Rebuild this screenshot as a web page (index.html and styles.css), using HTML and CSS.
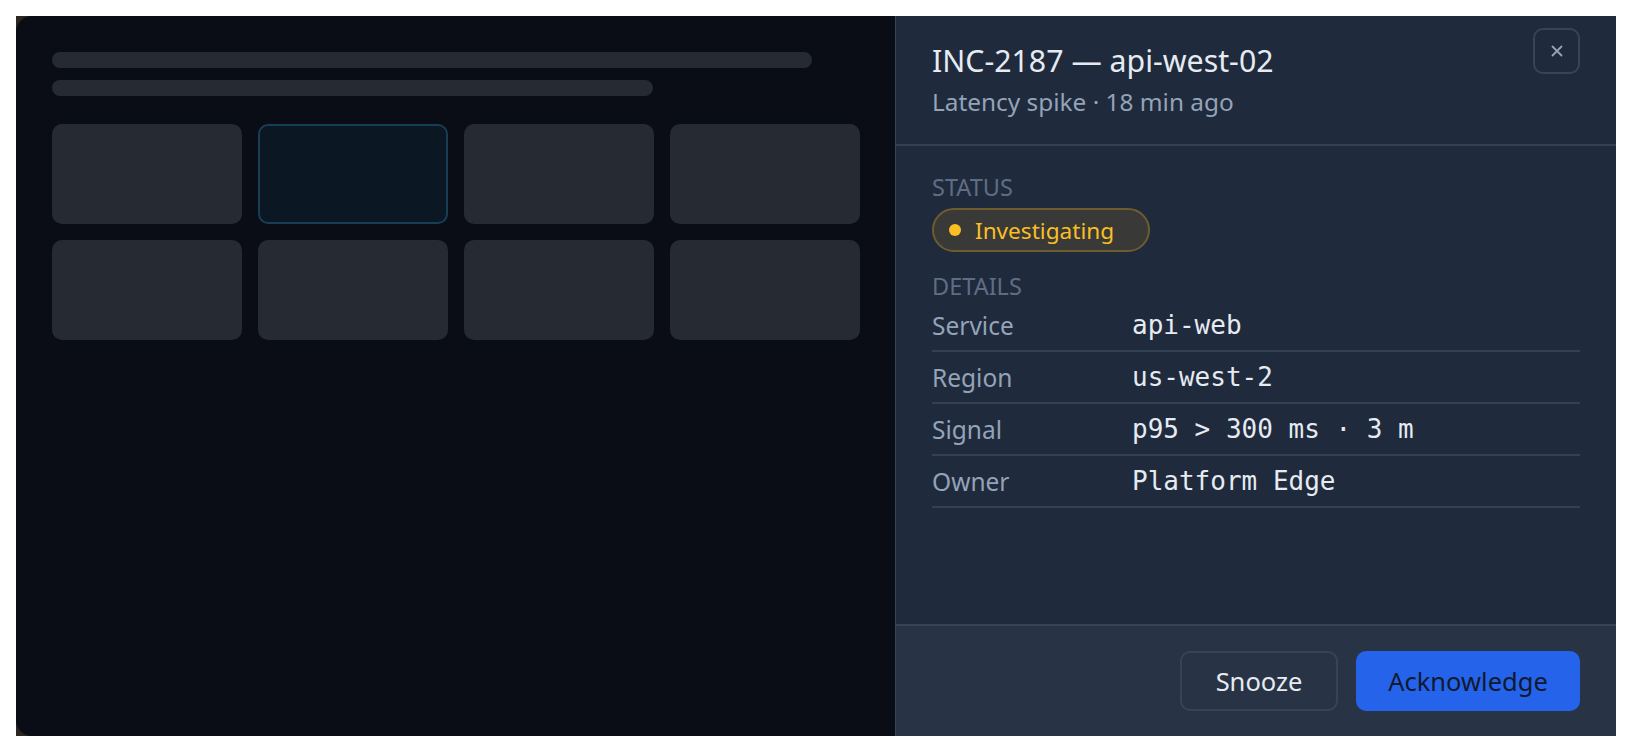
FILE: index.html
```html
<!DOCTYPE html>
<html lang="en">
<head>
<meta charset="utf-8">
<title>Incident INC-2187</title>
<link rel="stylesheet" href="styles.css">
</head>
<body>
<div class="frame">
  <main class="main">
    <div class="skeleton-lines">
      <div class="line line-long"></div>
      <div class="line line-short"></div>
    </div>
    <div class="cards">
      <div class="card"></div>
      <div class="card card-active"></div>
      <div class="card"></div>
      <div class="card"></div>
      <div class="card"></div>
      <div class="card"></div>
      <div class="card"></div>
      <div class="card"></div>
    </div>
  </main>

  <aside class="drawer">
    <header class="drawer-head">
      <div class="head-text">
        <h1 class="title">INC-2187 — api-west-02</h1>
        <p class="subtitle">Latency spike · 18 min ago</p>
      </div>
      <button class="close" aria-label="Close">
        <svg width="14" height="14" viewBox="0 0 14 14"><path d="M2.5 2.5 L11.5 11.5 M11.5 2.5 L2.5 11.5" stroke="#94a3b8" stroke-width="1.8" stroke-linecap="round"/></svg>
      </button>
    </header>

    <section class="drawer-body">
      <div class="section-label">Status</div>
      <span class="badge"><span class="dot"></span>Investigating</span>

      <div class="section-label details-label">Details</div>
      <dl class="details">
        <div class="row"><dt>Service</dt><dd>api-web</dd></div>
        <div class="row"><dt>Region</dt><dd>us-west-2</dd></div>
        <div class="row"><dt>Signal</dt><dd>p95 &gt; 300 ms · 3 m</dd></div>
        <div class="row"><dt>Owner</dt><dd>Platform Edge</dd></div>
      </dl>
    </section>

    <footer class="drawer-foot">
      <button class="btn btn-ghost">Snooze</button>
      <button class="btn btn-primary">Acknowledge</button>
    </footer>
  </aside>
</div>
</body>
</html>
```

FILE: styles.css
```css
* { box-sizing: border-box; }

html, body {
  margin: 0;
  padding: 0;
  background: #ffffff;
}

body {
  padding: 16px;
  font-family: "Noto Sans", "Open Sans", sans-serif;
}

.frame {
  position: relative;
  width: 1600px;
  height: 720px;
  background: #2a2721;
  overflow: hidden;
}

.main {
  height: 100%;
  background: #0a0d16;
  border-radius: 16px;
  padding: 36px;
}

.skeleton-lines {
  display: flex;
  flex-direction: column;
  gap: 12px;
  width: 808px;
}

.line {
  height: 16px;
  border-radius: 8px;
  background: #262a33;
}

.line-long { width: 760px; }
.line-short { width: 601px; }

.cards {
  margin-top: 28px;
  width: 808px;
  display: grid;
  grid-template-columns: repeat(4, 1fr);
  grid-auto-rows: 100px;
  gap: 16px;
}

.card {
  background: #262a33;
  border-radius: 10px;
}

.card-active {
  background: #0b1722;
  border: 2px solid #183e55;
}

/* Drawer overlay */
.drawer {
  position: absolute;
  top: 0;
  right: 0;
  bottom: 0;
  width: 721px;
  background: #1f2a3c;
  border-left: 1px solid #36445a;
  display: flex;
  flex-direction: column;
  color: #e2e8f0;
}

.drawer-head {
  display: flex;
  justify-content: space-between;
  align-items: flex-start;
  padding: 26px 36px 26px 36px;
  border-bottom: 2px solid #334155;
}

.title {
  margin: 0;
  font-size: 30.3px;
  line-height: 38px;
  font-weight: 400;
  color: #e6ebf2;
}

.subtitle {
  margin: 6px 0 0 0;
  font-size: 24.4px;
  line-height: 32px;
  color: #94a3b8;
}

.close {
  margin-top: -14px;
  width: 47px;
  height: 46px;
  border: 2px solid #36445a;
  border-radius: 10px;
  background: transparent;
  display: flex;
  align-items: center;
  justify-content: center;
  padding: 0;
}

.drawer-body {
  flex: 1;
  padding: 27px 36px 0 36px;
}

.section-label {
  font-size: 23.5px;
  line-height: 28px;
  text-transform: uppercase;
  color: #5f6d84;
}

.badge {
  margin-top: 7px;
  display: inline-flex;
  align-items: center;
  gap: 14px;
  height: 44px;
  padding: 0 34px 0 15px;
  border: 2px solid #6e5c2f;
  border-radius: 22px;
  background: #393a37;
  color: #fbbf24;
  font-size: 22.6px;
}

.dot {
  width: 12px;
  height: 12px;
  border-radius: 50%;
  background: #fbbf24;
}

.details-label {
  margin-top: 20px;
}

.details {
  margin: 0;
}

.row {
  display: flex;
  align-items: center;
  height: 52px;
  border-bottom: 2px solid #334155;
}

.row dt {
  width: 200px;
  font-size: 24.5px;
  color: #94a3b8;
}

.row dd {
  margin: 0;
  font-family: "DejaVu Sans Mono", "Liberation Mono", monospace;
  font-size: 26px;
  color: #e6ebf2;
}

.drawer-foot {
  height: 112px;
  background: #283345;
  border-top: 2px solid #36445a;
  display: flex;
  justify-content: flex-end;
  align-items: center;
  gap: 18px;
  padding: 0 36px;
}

.btn {
  height: 60px;
  border-radius: 10px;
  font-family: "Noto Sans", "Open Sans", sans-serif;
  font-size: 25.5px;
  padding: 0;
}

.btn-ghost {
  width: 158px;
  background: transparent;
  border: 2px solid #36445a;
  color: #e6ebf2;
}

.btn-primary {
  width: 224px;
  background: #2563eb;
  border: none;
  color: #0f1a2e;
}
```
